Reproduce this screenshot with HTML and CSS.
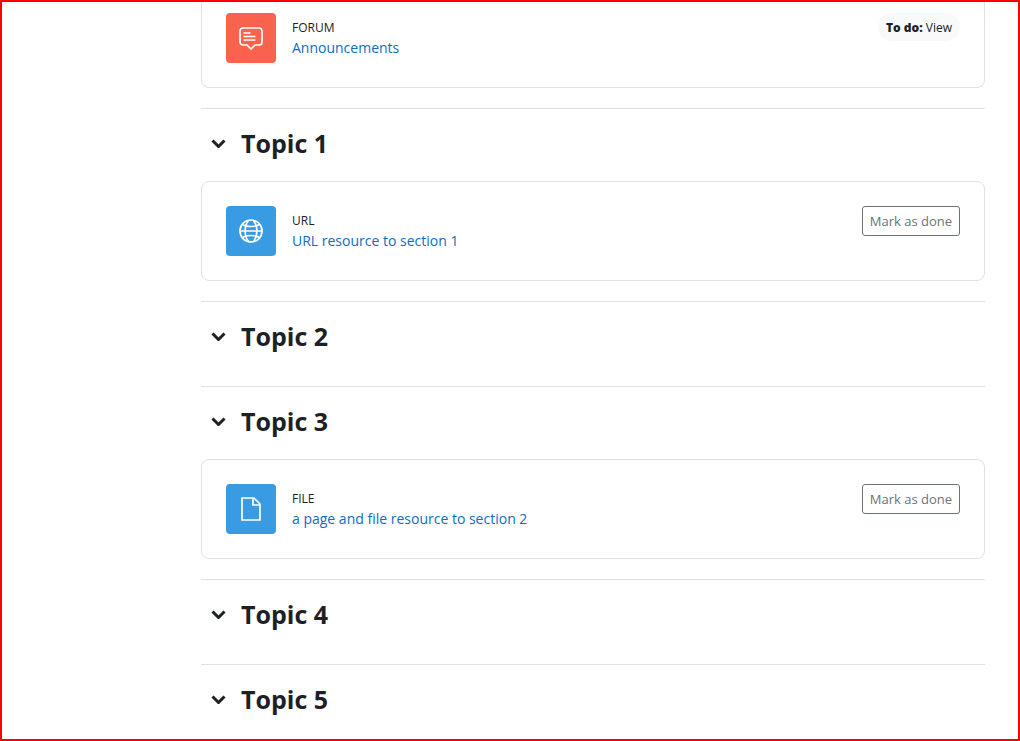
FILE: index.html
```html
<!DOCTYPE html>
<html lang="en">
<head>
    <meta charset="UTF-8">
    <meta name="viewport" content="width=device-width, initial-scale=1.0">
    <title>Course topics</title>
    <link rel="stylesheet" href="styles.css">
</head>
<body>

    <main class="course">

        <!-- General section -->
        <div class="activity activity-first">
            <span class="icon icon-forum">
                <svg viewBox="0 0 24 24" width="24" height="24" aria-hidden="true">
                    <path d="M4 2h16a3 3 0 0 1 3 3v11a3 3 0 0 1-3 3h-4L12 23l-4-4H4a3 3 0 0 1-3-3V5a3 3 0 0 1 3-3z"/>
                    <path d="M4.500 7h7M4.500 10.500h12M4.500 14h12"/>
                </svg>
            </span>
            <div class="info">
                <span class="type">FORUM</span>
                <a href="#">Announcements</a>
            </div>
            <span class="badge"><strong>To do:</strong> View</span>
        </div>

        <section class="topic">
            <div class="topic-header">
                <button class="toggle" aria-label="Collapse Topic 1">
                    <svg viewBox="0 0 15 9" width="15" height="9" aria-hidden="true"><path d="M1.500 1.500l6 6 6-6"/></svg>
                </button>
                <h3>Topic 1</h3>
            </div>
            <div class="activity">
                <span class="icon icon-resource">
                    <svg viewBox="0 0 24 24" width="24" height="24" aria-hidden="true">
                        <circle cx="12" cy="12" r="11"/>
                        <path d="M1 12h22M9.500 1.500C5 7 5 17 9.500 22.500M14.500 1.500C19 7 19 17 14.500 22.500"/>
                        <path d="M3.500 5C5 7 8 7.500 12 7.500S19 7 20.500 5M3.500 19C5 17 8 16.500 12 16.500S19 17 20.500 19"/>
                    </svg>
                </span>
                <div class="info">
                    <span class="type">URL</span>
                    <a href="#">URL resource to section 1</a>
                </div>
                <button class="done">Mark as done</button>
            </div>
        </section>

        <section class="topic">
            <div class="topic-header">
                <button class="toggle" aria-label="Collapse Topic 2">
                    <svg viewBox="0 0 15 9" width="15" height="9" aria-hidden="true"><path d="M1.500 1.500l6 6 6-6"/></svg>
                </button>
                <h3>Topic 2</h3>
            </div>
        </section>

        <section class="topic">
            <div class="topic-header">
                <button class="toggle" aria-label="Collapse Topic 3">
                    <svg viewBox="0 0 15 9" width="15" height="9" aria-hidden="true"><path d="M1.500 1.500l6 6 6-6"/></svg>
                </button>
                <h3>Topic 3</h3>
            </div>
            <div class="activity">
                <span class="icon icon-resource">
                    <svg viewBox="0 0 24 24" width="24" height="24" aria-hidden="true">
                        <path d="M3 1h12l6 6v16H3z"/>
                        <path d="M14 1v7h7"/>
                    </svg>
                </span>
                <div class="info">
                    <span class="type">FILE</span>
                    <a href="#">a page and file resource to section 2</a>
                </div>
                <button class="done">Mark as done</button>
            </div>
        </section>

        <section class="topic">
            <div class="topic-header">
                <button class="toggle" aria-label="Collapse Topic 4">
                    <svg viewBox="0 0 15 9" width="15" height="9" aria-hidden="true"><path d="M1.500 1.500l6 6 6-6"/></svg>
                </button>
                <h3>Topic 4</h3>
            </div>
        </section>

        <section class="topic">
            <div class="topic-header">
                <button class="toggle" aria-label="Collapse Topic 5">
                    <svg viewBox="0 0 15 9" width="15" height="9" aria-hidden="true"><path d="M1.500 1.500l6 6 6-6"/></svg>
                </button>
                <h3>Topic 5</h3>
            </div>
        </section>

    </main>

</body>
</html>
```
FILE: styles.css
```css
* {
    box-sizing: border-box;
}

body {
    margin: 0;
    font-family: "Segoe UI", "Open Sans", "Noto Sans", sans-serif;
    font-size: 14px;
    line-height: 20px;
    color: #1d2125;
    background-color: #fff;
}

.course {
    min-height: 100vh;
    padding: 0 33px 0 199px;
    border: 2px solid #f00;
}

/* Topics */
.topic {
    padding-bottom: 12px;
    border-top: 1px solid #dee2e6;
}

.topic:last-child {
    padding-bottom: 0;
}

.topic-header {
    display: flex;
    align-items: center;
    height: 72px;
    padding-bottom: 4px;
}

.topic-header h3 {
    margin: 0 0 0 5px;
    font-size: 25px;
    line-height: 32px;
    font-weight: 700;
}

.toggle {
    display: flex;
    align-items: center;
    justify-content: center;
    width: 35px;
    height: 35px;
    padding: 0;
    border: 0;
    background: none;
    cursor: pointer;
}

.toggle svg {
    fill: none;
    stroke: #1d2125;
    stroke-width: 3;
}

/* Activity cards */
.activity {
    display: flex;
    align-items: flex-start;
    margin-bottom: 8px;
    padding: 24px;
    border: 1px solid #dee2e6;
    border-radius: 8px;
}

.activity-first {
    margin-bottom: 20px;
    padding-top: 11px;
    border-top: 0;
    border-radius: 0 0 8px 8px;
}

.icon {
    display: flex;
    align-items: center;
    justify-content: center;
    width: 50px;
    height: 50px;
    border-radius: 4px;
}

.icon svg {
    fill: none;
    stroke: #fff;
    stroke-width: 1.7;
}

.icon-forum {
    background-color: #f9634d;
}

.icon-resource {
    background-color: #399be2;
}

.info {
    display: flex;
    flex: 1;
    flex-direction: column;
    align-items: flex-start;
    margin: 5px 0 0 16px;
}

.type {
    font-size: 12px;
}

.info a {
    color: #0f6cbf;
    text-decoration: none;
}

.info a:hover {
    text-decoration: underline;
}

.badge {
    padding: 5px 8px 3px;
    border-radius: 14px;
    font-size: 12px;
    background-color: #f8f9fa;
}

.badge strong {
    font-weight: 800;
}

.done {
    height: 30px;
    padding: 0 7px;
    border: 1px solid #6a737b;
    border-radius: 3px;
    font-family: inherit;
    font-size: 13px;
    color: #6a737b;
    background-color: #fff;
    cursor: pointer;
}
```
